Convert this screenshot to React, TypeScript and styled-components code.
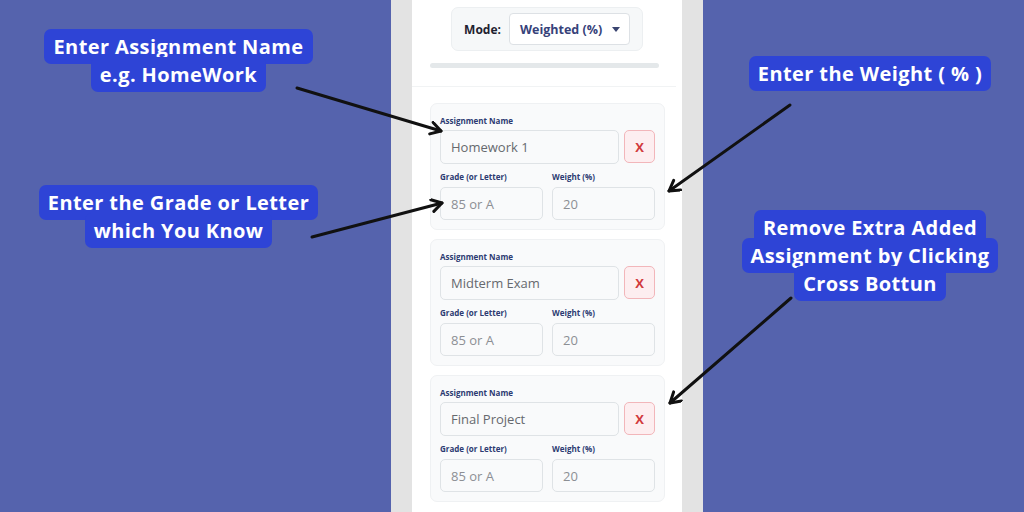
import React from "react";
import styled, { createGlobalStyle } from "styled-components";

const GlobalStyle = createGlobalStyle`
  * { box-sizing: border-box; }
  html, body { margin: 0; padding: 0; }
  body {
    font-family: "Open Sans", "Liberation Sans", sans-serif;
    background: #5563ad;
  }
`;

const Page = styled.div`
  position: relative;
  width: 1024px;
  height: 512px;
  overflow: hidden;
  display: grid;
  grid-template-columns: 391px 312px 1fr;
  background: #5563ad;
`;

const Side = styled.div<{ $padLeft: number; $padRight: number }>`
  display: flex;
  flex-direction: column;
  align-items: center;
  padding-left: ${(p) => p.$padLeft}px;
  padding-right: ${(p) => p.$padRight}px;
`;

const CalloutBlock = styled.div<{ $offset: number }>`
  margin-top: ${(p) => p.$offset}px;
  text-align: center;
  font-size: 20px;
  font-weight: 700;
  line-height: 28px;
  letter-spacing: 0.4px;
  white-space: nowrap;
`;

const CalloutText = styled.span`
  display: inline;
  background: #2e44d6;
  color: #ffffff;
  padding: 4px 9px;
  border-radius: 7px;
  -webkit-box-decoration-break: clone;
  box-decoration-break: clone;
`;

const Strip = styled.div`
  background: #e3e3e3;
  padding: 0 21px;
`;

const Panel = styled.div`
  background: #ffffff;
  height: 100%;
  display: flex;
  flex-direction: column;
`;

const Header = styled.div`
  padding: 7px 17px 18px 18px;
  margin-right: 6px;
  border-bottom: 1px solid #f1f3f4;
  display: flex;
  flex-direction: column;
  align-items: center;
`;

const ModeBox = styled.div`
  display: flex;
  align-items: center;
  gap: 8px;
  margin-left: 5px;
  padding: 5px 12px;
  background: #f6f8f9;
  border: 1px solid #eceff1;
  border-radius: 7px;
`;

const ModeLabel = styled.span`
  font-size: 12px;
  font-weight: 700;
  color: #1f2230;
`;

const Select = styled.div`
  width: 121px;
  height: 32px;
  display: flex;
  align-items: center;
  justify-content: space-between;
  padding: 0 9px 0 10px;
  background: #ffffff;
  border: 1px solid #dde1e5;
  border-radius: 4px;
  font-size: 12.5px;
  font-weight: 700;
  color: #36427a;
`;

const Caret = styled.span`
  width: 0;
  height: 0;
  border-left: 4.5px solid transparent;
  border-right: 4.5px solid transparent;
  border-top: 5px solid #3a4470;
`;

const Divider = styled.div`
  align-self: stretch;
  margin-top: 12px;
  height: 5px;
  border-radius: 3px;
  background: #e4e8ea;
`;

const Cards = styled.div`
  display: flex;
  flex-direction: column;
  gap: 9px;
  padding: 16px 17px 0 18px;
`;

const Card = styled.div`
  padding: 11px 9px 9px 9px;
  background: #f9fafb;
  border: 1px solid #eff1f3;
  border-radius: 7px;
  display: flex;
  flex-direction: column;
`;

const Label = styled.div<{ $space: number }>`
  font-size: 8px;
  font-weight: 700;
  line-height: 12px;
  color: #2d3a72;
  margin-bottom: ${(p) => p.$space}px;
`;

const Row = styled.div<{ $gap: number; $top?: number }>`
  display: flex;
  gap: ${(p) => p.$gap}px;
  margin-top: ${(p) => p.$top ?? 0}px;
`;

const Field = styled.div`
  flex: 1;
  display: flex;
  flex-direction: column;
`;

const Input = styled.div<{ $h: number; $muted?: boolean; $grow?: boolean }>`
  flex: ${(p) => (p.$grow ? "1" : "none")};
  height: ${(p) => p.$h}px;
  display: flex;
  align-items: center;
  padding: 0 10px;
  background: #f9fafb;
  border: 1px solid #dfe3e6;
  border-radius: 5px;
  font-size: 13px;
  color: ${(p) => (p.$muted ? "#8c8f94" : "#66696e")};
`;

const RemoveButton = styled.div`
  width: 31px;
  height: 33px;
  display: flex;
  align-items: center;
  justify-content: center;
  background: #fdeef0;
  border: 1px solid #f2b6ba;
  border-radius: 5px;
  font-size: 13px;
  font-weight: 700;
  color: #d13a3c;
`;

const Arrows = styled.svg`
  position: absolute;
  inset: 0;
  pointer-events: none;
`;

const assignments = ["Homework 1", "Midterm Exam", "Final Project"];

function AssignmentCard({ name }: { name: string }) {
  return (
    <Card>
      <Label $space={3}>Assignment Name</Label>
      <Row $gap={5}>
        <Input $h={34} $grow>
          {name}
        </Input>
        <RemoveButton>X</RemoveButton>
      </Row>
      <Row $gap={9} $top={7}>
        <Field>
          <Label $space={4}>Grade (or Letter)</Label>
          <Input $h={33} $muted>
            85 or A
          </Input>
        </Field>
        <Field>
          <Label $space={4}>Weight (%)</Label>
          <Input $h={33} $muted>
            20
          </Input>
        </Field>
      </Row>
    </Card>
  );
}

const arrows = [
  { x1: 297, y1: 88, x2: 441, y2: 131 },
  { x1: 312, y1: 237, x2: 442, y2: 203 },
  { x1: 790, y1: 105, x2: 669, y2: 191 },
  { x1: 791, y1: 298, x2: 670, y2: 403 },
];

export default function App() {
  return (
    <>
      <GlobalStyle />
      <Page>
        <Side $padLeft={0} $padRight={34}>
          <CalloutBlock $offset={33}>
            <CalloutText>
              Enter Assignment Name
              <br />
              e.g. HomeWork
            </CalloutText>
          </CalloutBlock>
          <CalloutBlock $offset={100}>
            <CalloutText>
              Enter the Grade or Letter
              <br />
              which You Know
            </CalloutText>
          </CalloutBlock>
        </Side>

        <Strip>
          <Panel>
            <Header>
              <ModeBox>
                <ModeLabel>Mode:</ModeLabel>
                <Select>
                  Weighted (%)
                  <Caret />
                </Select>
              </ModeBox>
              <Divider />
            </Header>
            <Cards>
              {assignments.map((a) => (
                <AssignmentCard key={a} name={a} />
              ))}
            </Cards>
          </Panel>
        </Strip>

        <Side $padLeft={13} $padRight={0}>
          <CalloutBlock $offset={60}>
            <CalloutText>Enter the Weight ( % )</CalloutText>
          </CalloutBlock>
          <CalloutBlock $offset={126}>
            <CalloutText>
              Remove Extra Added
              <br />
              Assignment by Clicking
              <br />
              Cross Bottun
            </CalloutText>
          </CalloutBlock>
        </Side>

        <Arrows width="1024" height="512" viewBox="0 0 1024 512">
          <defs>
            <marker
              id="head"
              markerUnits="userSpaceOnUse"
              markerWidth="16"
              markerHeight="16"
              refX="12"
              refY="7"
              orient="auto"
            >
              <path
                d="M2,1 L12,7 L2,13"
                fill="none"
                stroke="#111"
                strokeWidth="3"
                strokeLinecap="round"
                strokeLinejoin="round"
              />
            </marker>
          </defs>
          {arrows.map((a, i) => (
            <line
              key={i}
              x1={a.x1}
              y1={a.y1}
              x2={a.x2}
              y2={a.y2}
              stroke="#111"
              strokeWidth="3"
              strokeLinecap="round"
              markerEnd="url(#head)"
            />
          ))}
        </Arrows>
      </Page>
    </>
  );
}
